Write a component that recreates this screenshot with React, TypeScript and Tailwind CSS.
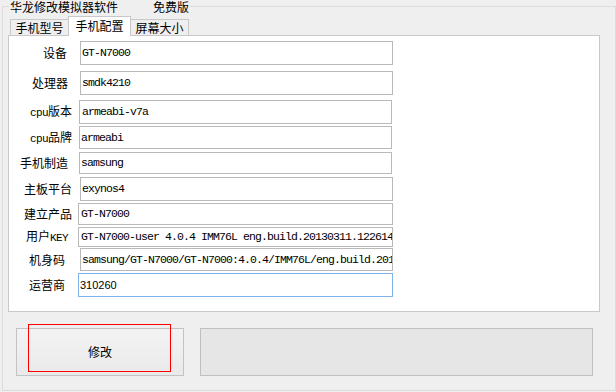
import React from "react";

type Row = {
  label: string;
  mt: string;
  h: string;
  lw: string;
  pr: string;
  iw: string;
  pl: string;
  val: string;
  blue?: boolean;
  sans?: boolean;
};

const rows: Row[] = [
  { label: "设备", mt: "mt-[5px]", h: "h-[24px]", lw: "w-[71px]", pr: "pr-[13px]", iw: "w-[313px]", pl: "pl-[1px]", val: "GT-N7000" },
  { label: "处理器", mt: "mt-[6px]", h: "h-[24px]", lw: "w-[71px]", pr: "pr-[12px]", iw: "w-[313px]", pl: "pl-[1px]", val: "smdk4210" },
  { label: "cpu版本", mt: "mt-[5px]", h: "h-[24px]", lw: "w-[70px]", pr: "pr-[7px]", iw: "w-[313px]", pl: "pl-[2px]", val: "armeabi-v7a" },
  { label: "cpu品牌", mt: "mt-[2px]", h: "h-[23px]", lw: "w-[70px]", pr: "pr-[7px]", iw: "w-[313px]", pl: "pl-[1px]", val: "armeabi" },
  { label: "手机制造", mt: "mt-[3px]", h: "h-[22px]", lw: "w-[70px]", pr: "pr-[11px]", iw: "w-[313px]", pl: "pl-[1px]", val: "samsung" },
  { label: "主板平台", mt: "mt-[3px]", h: "h-[24px]", lw: "w-[71px]", pr: "pr-[8px]", iw: "w-[313px]", pl: "pl-[1px]", val: "exynos4" },
  { label: "建立产品", mt: "mt-[2px]", h: "h-[22px]", lw: "w-[69px]", pr: "pr-[6px]", iw: "w-[315px]", pl: "pl-[2px]", val: "GT-N7000" },
  { label: "用户KEY", mt: "mt-[2px]", h: "h-[20px]", lw: "w-[69px]", pr: "pr-[10px]", iw: "w-[315px]", pl: "pl-[2px]", val: "GT-N7000-user 4.0.4 IMM76L eng.build.20130311.122614 test-keys" },
  { label: "机身码", mt: "mt-[1px]", h: "h-[23px]", lw: "w-[71px]", pr: "pr-[15px]", iw: "w-[313px]", pl: "pl-[1px]", val: "samsung/GT-N7000/GT-N7000:4.0.4/IMM76L/eng.build.20130311.122614:eng/test-keys" },
  { label: "运营商", mt: "mt-[2px]", h: "h-[24px]", lw: "w-[69px]", pr: "pr-[13px]", iw: "w-[315px]", pl: "pl-[1px]", val: "310260", blue: true, sans: true },
];

const cjk = "font-['Noto_Sans_CJK_SC',sans-serif]";

function Label({ text }: { text: string }) {
  const parts = text.split(/([A-Za-z]+)/).filter((p) => p.length > 0);
  return (
    <span className="whitespace-nowrap">
      {parts.map((p, i) =>
        /^[A-Za-z]+$/.test(p) ? (
          <span key={i} className="font-['Liberation_Mono',monospace] text-[11px] tracking-[-0.6px]">
            {p}
          </span>
        ) : (
          <span key={i}>{p}</span>
        )
      )}
    </span>
  );
}

export default function App() {
  return (
    <div className={`w-[616px] h-[392px] bg-[#efefef] pl-[2px] pt-[6px] overflow-hidden text-black ${cjk} text-[12px]`}>
      <div className="relative w-[614px] h-[385px] border border-[#dcdcdc] pl-[5px] pt-[9px]">
        {/* group title */}
        <div className="absolute left-[6px] top-[-7px] bg-[#efefef] px-[1px] leading-[13px] whitespace-nowrap">
          <span>华龙修改模拟器软件</span>
          <span className="ml-[35px]">免费版</span>
        </div>

        {/* tabs */}
        <div className="relative z-10 -mb-[1px] ml-[2px] flex h-[20px] items-end">
          <div className="mb-[1px] flex h-[16px] w-[58px] items-center justify-center border-l border-t border-[#c8c8c8] bg-[#efefef] leading-[14px]">
            手机型号
          </div>
          <div className="flex h-[20px] w-[63px] items-center justify-center border-l border-r border-t border-[#c8c8c8] bg-white pb-[1px] leading-[14px]">
            手机配置
          </div>
          <div className="mb-[1px] flex h-[16px] w-[58px] items-center justify-center border-r border-t border-[#c8c8c8] bg-[#efefef] leading-[14px]">
            屏幕大小
          </div>
        </div>

        {/* panel */}
        <div className="flex h-[277px] w-[592px] flex-col border border-[#c8c8c8] bg-white">
          {rows.map((r) => (
            <div key={r.label} className={`flex items-center ${r.mt} ${r.h}`}>
              <div className={`${r.lw} ${r.pr} text-right leading-[14px]`}>
                <Label text={r.label} />
              </div>
              <div
                className={`${r.iw} ${r.h} ${r.pl} flex items-center overflow-hidden whitespace-nowrap border bg-white ${
                  r.blue ? "border-[#7eb4ea]" : "border-[#b9b9b9]"
                }`}
              >
                {r.sans ? (
                  <span className="font-['Liberation_Sans',Arial,sans-serif] text-[11px] leading-[14px]">{r.val}</span>
                ) : (
                  <span className="whitespace-pre font-['Liberation_Mono',monospace] text-[11.5px] leading-[14px] tracking-[-0.9px]">
                    {r.val}
                  </span>
                )}
              </div>
            </div>
          ))}
        </div>

        {/* buttons */}
        <div className="ml-[8px] mt-[16px] flex gap-[16px]">
          <div className="relative flex h-[48px] w-[168px] items-center justify-center border border-[#c3c3c3] bg-gradient-to-b from-[#f3f3f3] to-[#eaeaea]">
            <span className="leading-[14px]">修改</span>
            <div className="absolute left-[11px] top-[-5px] h-[48px] w-[143px] border border-[#ff0000]" />
          </div>
          <div className="h-[48px] w-[393px] border border-[#c0c0c0] bg-[#e6e6e6]" />
        </div>
      </div>
    </div>
  );
}
